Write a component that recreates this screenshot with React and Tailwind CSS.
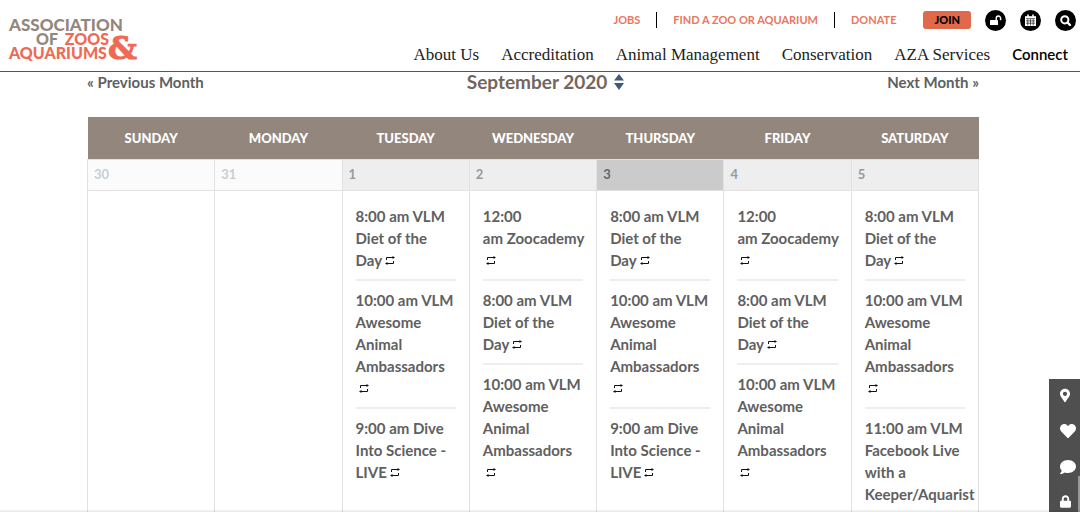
import React from "react";
import { FaHeart, FaComment, FaLock, FaMapMarkerAlt } from "react-icons/fa";

const diet = ["8:00 am VLM", "Diet of the", "Day"];
const zoocademy = ["12:00", "am Zoocademy", ""];
const ambassadors = ["10:00 am VLM", "Awesome", "Animal", "Ambassadors", ""];
const dive = ["9:00 am Dive", "Into Science -", "LIVE"];
const facebook = ["11:00 am VLM", "Facebook Live", "with a", "Keeper/Aquarist", ""];

const days = [
  { name: "Sunday", date: 30, tone: "bg-[#fbfbfb] text-[#c9cdd4]", events: [] },
  { name: "Monday", date: 31, tone: "bg-[#fbfbfb] text-[#c9cdd4]", events: [] },
  { name: "Tuesday", date: 1, tone: "bg-[#eeeeee] text-[#999999]", events: [diet, ambassadors, dive] },
  { name: "Wednesday", date: 2, tone: "bg-[#eeeeee] text-[#999999]", events: [zoocademy, diet, ambassadors] },
  { name: "Thursday", date: 3, tone: "bg-[#cbcbcb] text-[#666666]", events: [diet, ambassadors, dive] },
  { name: "Friday", date: 4, tone: "bg-[#eeeeee] text-[#999999]", events: [zoocademy, diet, ambassadors] },
  { name: "Saturday", date: 5, tone: "bg-[#eeeeee] text-[#999999]", events: [diet, ambassadors, facebook] },
];

function RepeatIcon() {
  return (
    <svg className="ml-[3px] inline-block size-[10px] align-baseline" viewBox="0 0 10 10" fill="none" stroke="#111" strokeWidth="1" aria-label="Recurring">
      <path d="M1.5 4V1.5H8M8.5 5V7.5H2" />
      <path d="M7.5 0L10 1.5L7.5 3ZM2.5 6L0 7.5L2.5 9Z" fill="#111" stroke="none" />
    </svg>
  );
}

function Logo() {
  return (
    <a href="#home" aria-label="Association of Zoos and Aquariums" className="shrink-0">
      <svg width="140" height="60" viewBox="0 0 140 60" className="overflow-visible font-['Lato',sans-serif] text-[16px] font-black">
        <text x="0" y="21" fill="#93877d" className="text-[17px]">ASSOCIATION</text>
        <text x="27" y="35" fill="#93877d">OF</text>
        <text x="100" y="35" fill="#ee6a55" textAnchor="end">ZOOS</text>
        <text x="0" y="49" fill="#ee6a55">AQUARIUMS</text>
        <text x="99" y="49" fill="#ee6a55" stroke="#ee6a55" strokeWidth="1" className="font-['DejaVu_Serif',serif] text-[32px] font-bold">&amp;</text>
      </svg>
    </a>
  );
}

function Round({ label, children }) {
  return (
    <button aria-label={label} className="flex size-[21px] items-center justify-center rounded-full bg-black text-white">
      {children}
    </button>
  );
}

function Separator() {
  return <span className="h-4 w-px bg-black" />;
}

function Header() {
  return (
    <header className="flex h-[72px] justify-between border-b border-[#555555] bg-white pl-[9px]">
      <div className="pt-[10px]">
        <Logo />
      </div>
      <div className="flex flex-col items-end">
        <div className="flex h-10 items-center gap-[14px] pr-1 text-[11px] font-bold text-[#ea7660]">
          <nav className="mr-[13px] flex items-center gap-4" aria-label="Utility">
            <a href="#jobs">JOBS</a>
            <Separator />
            <a href="#find">FIND A ZOO OR AQUARIUM</a>
            <Separator />
            <a href="#donate">DONATE</a>
          </nav>
          <a href="#join" className="rounded-[3px] bg-[#e0684b] px-[11px] text-[11px] leading-[18px] font-black text-black">JOIN</a>
          <Round label="Log in">
            <svg className="size-[13px]" viewBox="0 0 13 13" fill="none">
              <rect x="1" y="6" width="8" height="5" rx="0.6" fill="#fff" />
              <path d="M7.2 6V4.2a2.2 2.2 0 0 1 4.4 0V6.2" stroke="#fff" strokeWidth="1.4" />
            </svg>
          </Round>
          <Round label="Calendar">
            <svg className="size-[13px]" viewBox="0 0 13 13">
              <path d="M1 2.2h11V12H1z" fill="#fff" />
              <path d="M4 0.5v2.5M9 0.5v2.5" stroke="#fff" strokeWidth="1.6" />
              <path d="M2 4.6h9M2 6.9h9M2 9.2h9M3.8 5v6.5M6.5 5v6.5M9.2 5v6.5" stroke="#000" strokeWidth="0.6" />
            </svg>
          </Round>
          <Round label="Search">
            <svg className="size-[13px]" viewBox="0 0 13 13" fill="none" stroke="#fff">
              <circle cx="5.8" cy="5.8" r="3.6" strokeWidth="2" />
              <path d="M8.5 8.5L11 11" strokeWidth="2.4" strokeLinecap="round" />
            </svg>
          </Round>
        </div>
        <nav className="flex h-7 items-center gap-[22px] pt-px pr-3 font-['Liberation_Serif',serif] text-[17px] text-[#222222]" aria-label="Main">
          <a href="#about">About Us</a>
          <a href="#accreditation">Accreditation</a>
          <a href="#animal">Animal Management</a>
          <a href="#conservation">Conservation</a>
          <a href="#services">AZA Services</a>
          <a href="#connect" className="font-['Lato',sans-serif] text-[15px] font-semibold text-black">Connect</a>
        </nav>
      </div>
    </header>
  );
}

function Event({ lines, divided }) {
  return (
    <div className={divided ? "border-t-2 border-[#eeeeee] pt-2" : ""}>
      <a href="#event" className="mb-2 block whitespace-nowrap">
        {lines.map((line, i) => (
          <React.Fragment key={i}>
            {i > 0 && <br />}
            {line}
          </React.Fragment>
        ))}
        <RepeatIcon />
      </a>
    </div>
  );
}

export default function App() {
  return (
    <div className="relative h-screen overflow-hidden bg-white font-['Lato',sans-serif] text-[#606060]">
      <Header />
      <main className="pr-[101px] pl-[87px]">
        <div className="flex h-[45px] justify-between text-[15px] leading-5 font-bold">
          <a href="#previous">« Previous Month</a>
          <button className="flex h-5 items-center gap-[7px] text-[19px] leading-5 font-bold text-[#73665e]">
            September 2020
            <svg className="h-4 w-[10px]" viewBox="0 0 10 16" fill="#41597a" aria-hidden="true">
              <path d="M5 0L10 6.5H0ZM5 16L0 9H10Z" />
            </svg>
          </button>
          <a href="#next">Next Month »</a>
        </div>
        <table className="w-full table-fixed border-collapse">
          <thead>
            <tr className="h-[42px] bg-[#93877d] text-[13px] text-white">
              {days.map((d) => (
                <th key={d.name} className="pt-0.5 font-black uppercase">{d.name}</th>
              ))}
            </tr>
          </thead>
          <tbody>
            <tr className="h-[31px]">
              {days.map((d) => (
                <td key={d.name} className={`border border-[#e2e2e2] pl-[6px] text-[13px] font-bold ${d.tone}`}>{d.date}</td>
              ))}
            </tr>
            <tr className="h-[360px] align-top">
              {days.map((d) => (
                <td key={d.name} className="border border-[#e2e2e2] px-[13px] pt-[14px] text-[15px] leading-[22px] font-bold">
                  {d.events.map((lines, i) => (
                    <Event key={i} lines={lines} divided={i > 0} />
                  ))}
                </td>
              ))}
            </tr>
          </tbody>
        </table>
      </main>
      <aside className="absolute right-0 bottom-0 flex h-[133px] w-[31px] flex-col gap-5 bg-[#4f4f4f] pt-[9px] pl-[11px] text-white">
        <a href="#map" aria-label="Map"><FaMapMarkerAlt className="h-[15px] w-[10px]" /></a>
        <a href="#favorites" aria-label="Favorites"><FaHeart className="size-4" /></a>
        <a href="#chat" aria-label="Chat"><FaComment className="size-4" /></a>
        <a href="#account" aria-label="Account"><FaLock className="h-[13px] w-[11px]" /></a>
        <span className="absolute right-0 bottom-0 h-9 w-[2px] bg-[#999999]" />
      </aside>
      <div className="absolute inset-x-0 bottom-0 h-[3px] bg-linear-to-b from-transparent to-black/10" />
    </div>
  );
}
